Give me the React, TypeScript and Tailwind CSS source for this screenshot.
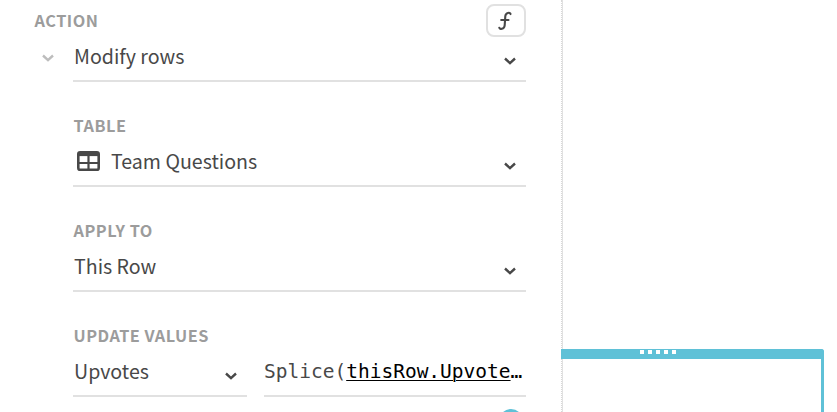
import type { ReactNode } from 'react';

function Chevron({ className = '' }: { className?: string }) {
  return (
    <svg className={className} width="12" height="8" viewBox="0 0 12 8" fill="none" stroke="currentColor" strokeWidth="2.4">
      <path d="M1 1.5 6 6.1 11 1.5" />
    </svg>
  );
}

function TableIcon() {
  return (
    <svg className="mr-[11px] ml-[3px] shrink-0" width="23" height="20" viewBox="0 0 23 20" fill="none">
      <rect x="1.3" y="1.3" width="20.4" height="17.6" rx="1.8" stroke="#484848" strokeWidth="2.6" />
      <path d="M1.5 3.3h20" stroke="#484848" strokeWidth="3.6" />
      <path d="M1.5 12h20M11.5 4v15" stroke="#484848" strokeWidth="2.2" />
    </svg>
  );
}

function Label({ children }: { children: ReactNode }) {
  return <div className="h-5 pl-[0.5px] text-[16.3px] leading-5 font-bold tracking-[0.5px] whitespace-nowrap text-[#9c9c9c]">{children}</div>;
}

function Select({ children }: { children: ReactNode }) {
  return (
    <div className="flex h-[46px] items-center border-b-2 border-[#e1e1e1] pl-px text-[19.6px] leading-6 whitespace-nowrap">
      <div className="flex -translate-y-[2px] items-center">{children}</div>
      <Chevron className="mt-[5px] mr-[10px] ml-auto" />
    </div>
  );
}

function Field({ label, children }: { label: string; children: ReactNode }) {
  return (
    <section className="h-[105px] pt-[33px]">
      <Label>{label}</Label>
      <div className="mt-[6px]">{children}</div>
    </section>
  );
}

export default function App() {
  return (
    <div className="flex h-[412px] w-[837px] overflow-hidden bg-white font-['Noto_Sans_CJK_SC',sans-serif] text-[#484848]">
      <aside className="w-[562px] shrink-0 pr-9 pl-[34px]">
        <header className="flex h-9 items-start justify-between pt-1">
          <div className="pt-[6px]"><Label>ACTION</Label></div>
          <button className="flex h-[33px] w-10 shrink-0 items-center justify-center rounded-lg border-2 border-[#e1e1e1]">
            <svg className="mr-[2px]" width="14" height="20" viewBox="0 0 14 20" fill="none" stroke="#484848" strokeWidth="2.1" strokeLinecap="round">
              <path d="M12.5 3.1V2.8C12.4 1.9 11.2 1.6 9.9 1.9C8.1 2.3 7.5 3.4 7.3 5.2L6.7 14.3C6.5 16.6 5.7 17.5 4 17.8C2.5 18 1.4 17.6 1.3 16.7M3.2 9H10.5" />
            </svg>
          </button>
        </header>
        <div className="pl-[39px]">
          <div className="relative">
            <Chevron className="absolute top-[18px] -left-[31px] text-[#bdbdbd]" />
            <Select>Modify rows</Select>
          </div>
          <Field label="TABLE"><Select><TableIcon />Team Questions</Select></Field>
          <Field label="APPLY TO"><Select>This Row</Select></Field>
          <Field label="UPDATE VALUES">
            <div className="flex gap-[17px]">
              <div className="w-[174px] shrink-0"><Select>Upvotes</Select></div>
              <div className="h-[46px] w-[262px] border-b-2 border-[#e1e1e1] pt-2 font-['DejaVu_Sans_Mono',monospace] text-[19.5px] leading-[26px] whitespace-nowrap">
                Splice(<span className="text-black underline decoration-1 underline-offset-2 [text-decoration-skip-ink:auto]">thisRow.Upvote</span><span className="text-black">…</span>
              </div>
            </div>
          </Field>
          <div className="mt-3 mr-[3px] ml-auto h-6 w-6 rounded-full bg-[#5fc1d7]" />
        </div>
      </aside>
      <div className="-ml-px h-full w-[2px] shrink-0 border-r border-l border-r-[#e1e1e1] border-l-[#d8d8d8] [border-left-style:dotted]" />
      <main className="grow pt-[349px]">
        <div className="-ml-[2px] h-20 w-[263px] rounded-tr-[3px] border-t-[10px] border-r-[3px] border-[#5fc1d7]">
          <div className="-mt-[9px] ml-[79px] flex gap-1">
            <i className="size-1 bg-white" /><i className="size-1 bg-white" /><i className="size-1 bg-white" /><i className="size-1 bg-white" /><i className="size-1 bg-white" />
          </div>
        </div>
      </main>
    </div>
  );
}
